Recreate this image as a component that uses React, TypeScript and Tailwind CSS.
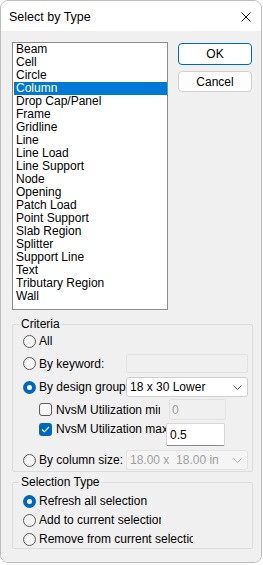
import React from "react";

const items = [
  "Beam",
  "Cell",
  "Circle",
  "Column",
  "Drop Cap/Panel",
  "Frame",
  "Gridline",
  "Line",
  "Line Load",
  "Line Support",
  "Node",
  "Opening",
  "Patch Load",
  "Point Support",
  "Slab Region",
  "Splitter",
  "Support Line",
  "Text",
  "Tributary Region",
  "Wall",
];

const Radio = ({ checked }: { checked?: boolean }) =>
  checked ? (
    <div className="w-[13px] h-[13px] rounded-full bg-[#0067c0] flex items-center justify-center shrink-0">
      <div className="w-[5px] h-[5px] rounded-full bg-white" />
    </div>
  ) : (
    <div className="w-[13px] h-[13px] rounded-full border border-[#5c5c5c] bg-[#f5f5f5] shrink-0" />
  );

const Check = ({ checked }: { checked?: boolean }) =>
  checked ? (
    <div className="w-[13px] h-[13px] rounded-[3px] bg-[#0067c0] flex items-center justify-center shrink-0">
      <svg width="9" height="7" viewBox="0 0 9 7">
        <polyline points="1,3.5 3.3,5.8 8,1" fill="none" stroke="white" strokeWidth="1.1" />
      </svg>
    </div>
  ) : (
    <div className="w-[13px] h-[13px] rounded-[3px] border border-[#5c5c5c] bg-[#f8f8f8] shrink-0" />
  );

const Chevron = ({ color }: { color: string }) => (
  <svg width="9" height="5" viewBox="0 0 9 5" className="shrink-0">
    <polyline points="0.5,0.5 4.5,4.5 8.5,0.5" fill="none" stroke={color} strokeWidth="1" />
  </svg>
);

export default function App() {
  return (
    <div
      className="w-[263px] h-[565px] bg-white text-[12px] leading-[14px] text-black"
      style={{ fontFamily: '"Liberation Sans", Arial, sans-serif' }}
    >
      <div className="w-[262px] h-[563px] border border-[#bdbdbd] rounded-[8px] overflow-hidden flex flex-col">
        {/* title bar */}
        <div className="h-[30px] bg-white flex items-center justify-between pl-[8px] pr-[10px] shrink-0">
          <span className="text-[12.5px] pt-[2px]">Select by Type</span>
          <svg width="10" height="10" viewBox="0 0 10 10" className="mt-[1px]">
            <line x1="0.5" y1="0.5" x2="9.5" y2="9.5" stroke="#1a1a1a" strokeWidth="1" />
            <line x1="9.5" y1="0.5" x2="0.5" y2="9.5" stroke="#1a1a1a" strokeWidth="1" />
          </svg>
        </div>

        <div className="flex-1 bg-[#f0f0f0] pl-[11px] pt-[11px]">
          <div className="flex">
            <div className="w-[156px] h-[268px] border border-[#8c8c8c] bg-white pl-[1px]">
              {items.map((it) => (
                <div
                  key={it}
                  className={`h-[13px] leading-[13px] pl-[2px] whitespace-nowrap ${
                    it === "Column" ? "bg-[#0078d7] text-white" : ""
                  }`}
                >
                  {it}
                </div>
              ))}
            </div>
            <div className="ml-[10px] mt-[1px] flex flex-col">
              <button className="w-[74px] h-[22px] rounded-[4px] border border-[#0067c0] bg-white flex items-center justify-center">
                OK
              </button>
              <button className="mt-[6px] w-[74px] h-[21px] rounded-[4px] border border-[#d0d0d0] bg-[#fdfdfd] flex items-center justify-center">
                Cancel
              </button>
            </div>
          </div>

          <fieldset className="mt-[7px] w-[241px] border border-[#dcdcdc] rounded-[2px] pb-[1px]">
            <legend className="ml-[6px] px-[2px] leading-[14px]">Criteria</legend>
            <div className="pl-[10px]">
              <div className="mt-[2px] h-[16px] flex items-center">
                <Radio />
                <span className="ml-[3px]">All</span>
              </div>
              <div className="mt-[5px] h-[19px] flex items-center">
                <Radio />
                <span className="ml-[3px] w-[87px] overflow-hidden whitespace-nowrap">By keyword:</span>
                <div className="w-[122px] h-[19px] border border-[#e2e2e2] bg-[#f0f0f0] rounded-[2px]" />
              </div>
              <div className="mt-[4px] h-[20px] flex items-center">
                <Radio checked />
                <span className="ml-[3px] w-[87px] overflow-hidden whitespace-nowrap">By design group</span>
                <div className="w-[122px] h-[20px] border border-[#cfcfcf] bg-white rounded-[3px] flex items-center justify-between pl-[3px] pr-[5px]">
                  <span>18 x 30 Lower</span>
                  <Chevron color="#5a5a5a" />
                </div>
              </div>
              <div className="mt-[2px] h-[21px] flex items-center">
                <div className="ml-[16px]">
                  <Check />
                </div>
                <span className="ml-[4px] w-[104px] overflow-hidden whitespace-nowrap">NvsM Utilization min</span>
                <div className="ml-[9px] w-[57px] h-[21px] border border-[#e2e2e2] bg-[#f0f0f0] rounded-[2px] flex items-center pl-[2px] text-[#a0a0a0]">
                  0
                </div>
              </div>
              <div className="mt-[3px] h-[23px] flex items-start">
                <div className="ml-[16px]">
                  <Check checked />
                </div>
                <span className="ml-[4px] w-[110px] h-[13px] leading-[13px] whitespace-nowrap">
                  NvsM Utilization max
                </span>
                <div className="w-[59px] h-[23px] border border-[#d6d6d6] border-b-[#8a8a8a] bg-white rounded-[2px] flex items-center pl-[3px]">
                  0.5
                </div>
              </div>
              <div className="mt-[4px] h-[20px] flex items-center">
                <Radio />
                <span className="ml-[3px] w-[87px] overflow-hidden whitespace-nowrap">By column size:</span>
                <div className="w-[122px] h-[20px] border border-[#e2e2e2] bg-[#f5f5f5] rounded-[3px] flex items-center justify-between pl-[3px] pr-[5px] text-[#a0a0a0]">
                  <span className="whitespace-pre">18.00 x  18.00 in</span>
                  <Chevron color="#b5b5b5" />
                </div>
              </div>
            </div>
          </fieldset>

          <fieldset className="mt-[3px] w-[241px] border border-[#dcdcdc] rounded-[2px] pb-[1px]">
            <legend className="ml-[6px] px-[2px] leading-[14px]">Selection Type</legend>
            <div className="pl-[10px]">
              <div className="mt-[4px] h-[16px] flex items-center">
                <Radio checked />
                <span className="ml-[3px] whitespace-nowrap">Refresh all selection</span>
              </div>
              <div className="mt-[3px] h-[16px] flex items-center">
                <Radio />
                <span className="ml-[3px] w-[122px] overflow-hidden whitespace-nowrap">Add to current selection</span>
              </div>
              <div className="mt-[3px] h-[16px] flex items-center">
                <Radio />
                <span className="ml-[3px] w-[154px] overflow-hidden whitespace-nowrap">
                  Remove from current selection
                </span>
              </div>
            </div>
          </fieldset>
        </div>
      </div>
    </div>
  );
}
